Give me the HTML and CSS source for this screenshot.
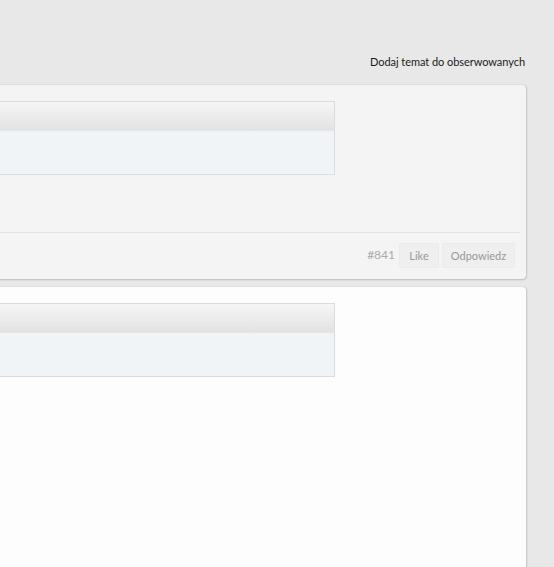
FILE: index.html
```html
<!DOCTYPE html>
<html lang="pl">
<head>
  <meta charset="UTF-8" />
  <meta name="viewport" content="width=device-width, initial-scale=1.0"/>
  <title>Temat</title>
  <link rel="stylesheet" href="styles.css">
</head>
<body>
  <div class="page">
    <div class="topic-actions">
      <a href="#" class="follow">Dodaj temat do obserwowanych</a>
    </div>

    <div class="post">
      <div class="post-body">
        <div class="quote">
          <div class="quote-head"></div>
          <div class="quote-text"></div>
        </div>
      </div>
      <div class="post-footer">
        <span class="post-id">#841</span>
        <button class="btn btn-like">Like</button>
        <button class="btn btn-reply">Odpowiedz</button>
      </div>
    </div>

    <div class="post post-new">
      <div class="post-body">
        <div class="quote">
          <div class="quote-head"></div>
          <div class="quote-text"></div>
        </div>
      </div>
    </div>
  </div>
</body>
</html>
```

FILE: styles.css
```css
html, body {
  margin: 0;
  height: 100%;
  overflow: hidden;
}
body {
  font-family: Lato, "Open Sans", Arial, sans-serif;
  background-color: #e8e8e8;
}
.page {
  display: flex;
  flex-direction: column;
  align-items: flex-end;
  padding-right: 28px;
}
.topic-actions {
  height: 85px;
  display: flex;
  align-items: flex-start;
  padding-top: 55px;
  box-sizing: border-box;
}
.follow {
  font-size: 11px;
  letter-spacing: -0.05px;
  color: #1a1a1a;
  text-decoration: none;
  margin-right: 1px;
}
.post {
  width: 800px;
  flex-shrink: 0;
  background: #f4f4f4;
  border-radius: 4px;
  box-shadow: 0 1px 2px rgba(0,0,0,0.18), 1px 0 2px rgba(0,0,0,0.1);
  margin-bottom: 8px;
}
.post-body {
  padding: 16px 185px 57px 16px;
  border-bottom: 1px solid #e4e4e4;
  margin-right: 6px;
}
.quote {
  border: 1px solid #dcdcdc;
}
.quote-head {
  height: 28px;
  background: linear-gradient(#f6f6f6, #e2e2e2);
  border-bottom: 1px solid #e6e6e6;
}
.quote-text {
  height: 43px;
  background: #f1f4f7;
}
.post-footer {
  display: flex;
  justify-content: flex-end;
  align-items: flex-start;
  gap: 3px;
  padding: 10px 11px 11px 0;
}
.post-id {
  font-size: 12px;
  color: #aaa;
  margin-right: 1px;
  margin-top: 4px;
}
.btn {
  font-family: inherit;
  font-size: 11px;
  color: #999;
  background: #efefef;
  border: 1px solid #ebebeb;
  border-radius: 2px;
  height: 25px;
  padding: 0;
  text-align: center;
}
.btn-like {
  width: 40px;
}
.btn-reply {
  width: 73px;
}
.post-new {
  background: #fdfdfd;
  height: 400px;
}
.post-new .post-body {
  border-bottom: none;
}
```
